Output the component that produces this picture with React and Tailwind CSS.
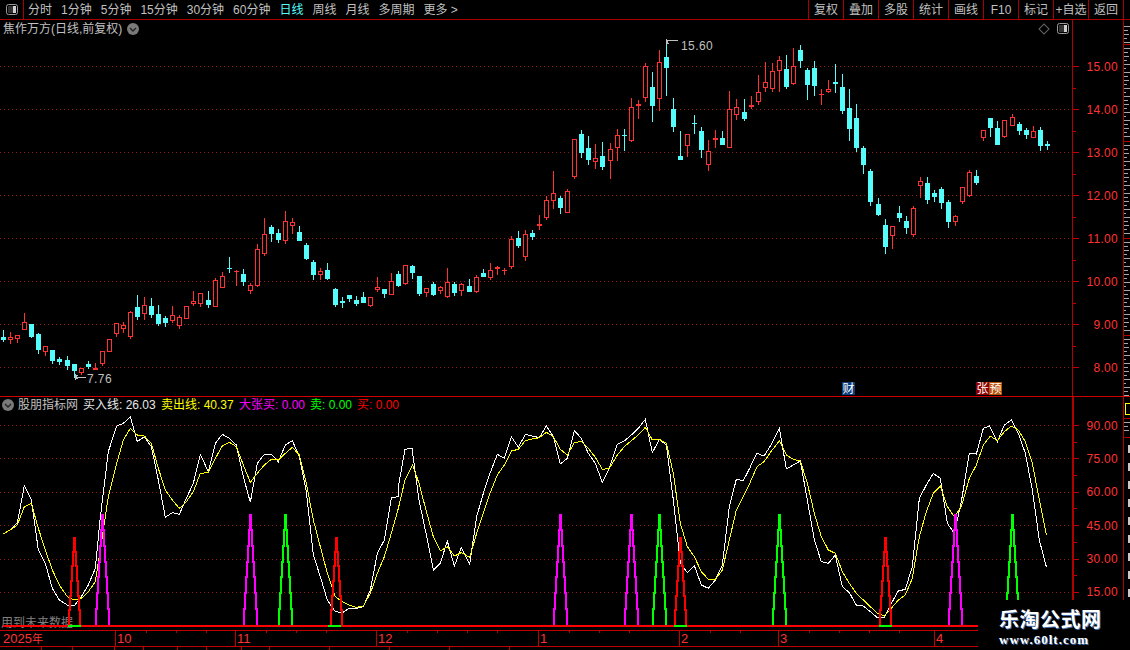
const sans = "font-['Liberation_Sans','Noto_Sans_CJK_SC',sans-serif]";

// [zoomX, red, wickTop, bodyTop, bodyBottom, wickBottom]  read at 3x from the reference
const groups = [
  { ox: 0, oy: 200, rows: [
    [10,0,390,411,420,425],[31,1,396,412,419,431],[52,1,405,406,416,429],[73,1,339,367,389,390],[94,0,372,372,411,414],
    [115,0,400,403,450,462],[136,1,438,439,456,468],[157,0,450,450,483,492],[178,0,471,477,486,495],[202,0,468,480,498,510],
    [223,0,492,492,513,535],[244,1,504,505,520,525],[265,0,483,492,501,507],[286,1,489,503,509,510],[307,1,453,454,491,498],
    [328,1,418,418,456,456],[349,1,369,370,402,411],[370,1,366,375,386,399],[391,1,333,336,411,417],[412,0,285,321,351,360],
    [433,1,291,316,342,360],[454,0,294,318,345,354],[475,0,315,342,372,378],[496,0,348,354,369,381],[517,1,318,346,362,369],
    [538,1,345,351,378,387],[559,1,319,319,356,356],[580,1,273,304,312,318],[601,1,279,280,312,321],[625,0,273,300,315,324],
    [646,1,234,240,320,321],[667,1,216,229,263,264],[688,0,171,204,207,219],[709,1,210,214,217,258],[730,0,207,222,246,258],
    [751,1,249,255,273,282],[772,1,132,148,258,261],[793,1,54,103,162,168],[814,0,75,81,102,126],[835,0,87,99,120,129],
    [856,1,33,64,122,132],[877,1,54,67,77,102],[898,0,78,96,123,123],[919,0,129,135,177,180],[940,0,180,186,225,240],
    [961,1,204,213,224,240],[982,0,189,210,237,240],[1006,0,264,267,315,321],[1027,0,291,303,309,324],[1048,0,285,285,297,306],
    [1069,0,288,300,312,318],[1090,0,276,291,309,309],[1111,1,291,292,318,321],[1132,1,231,262,270,276],
  ]},
  { ox: 380, oy: 30, rows: [
    [13,0,777,777,792,804],[34,1,729,754,794,795],[55,0,723,732,768,771],[76,1,705,706,761,765],[97,0,705,708,729,747],
    [118,0,738,738,792,798],[139,1,775,775,788,801],[160,0,756,762,795,798],[181,1,768,772,782,792],[202,1,714,757,800,804],
    [223,0,756,762,789,798],[244,1,759,763,784,798],[268,0,747,768,786,786],[289,1,735,742,785,789],[310,0,717,729,741,741],
    [331,1,699,721,743,750],[352,1,708,712,716,735],[373,1,714,721,723,735],[394,1,618,628,710,717],[415,0,603,624,648,654],
    [436,1,600,613,680,693],[457,0,600,609,621,630],[478,1,555,583,587,600],[499,1,498,511,563,570],[520,1,423,490,512,537],
    [541,0,498,504,534,552],[562,1,477,484,548,549],[583,1,327,328,440,447],[604,0,300,312,369,384],[625,0,318,354,390,405],
    [646,1,342,385,395,417],[667,0,336,378,411,420],[691,1,339,358,392,447],[712,1,297,316,353,393],[733,0,297,315,318,363],
    [754,1,204,232,332,336],[775,1,210,223,227,267],[796,1,99,109,203,216],[817,0,126,171,228,276],[838,1,60,97,206,243],
    [859,0,38,81,114,198],[880,0,204,237,291,306],[901,0,303,378,390,390],[922,1,312,313,347,381],[943,0,255,279,282,312],
    [964,0,291,303,360,384],[985,1,330,364,404,423],[1006,1,300,325,329,354],[1027,0,303,324,345,345],[1048,1,183,238,353,354],
    [1069,1,207,232,254,270],[1093,0,207,246,267,273],[1114,1,198,226,230,237],[1135,1,135,187,215,225],
  ]},
  { ox: 760, oy: 30, rows: [
    [16,1,96,157,173,186],[37,1,99,124,176,186],[58,1,78,91,124,186],[79,0,75,117,171,177],[100,1,54,109,163,165],
    [121,0,45,60,93,114],[142,0,114,120,165,210],[163,0,93,114,168,198],[184,1,177,192,196,225],[205,1,150,178,186,189],
    [226,0,102,156,162,189],[247,0,132,171,243,252],[268,0,177,234,297,333],[289,0,222,264,354,366],[310,0,348,354,405,432],
    [331,0,417,423,516,528],[355,0,504,522,555,558],[376,0,567,585,651,672],[397,1,588,589,617,657],[418,0,528,549,564,576],
    [439,0,558,573,594,612],[460,1,528,535,614,621],[481,1,441,454,467,504],[502,0,441,459,510,522],[523,0,480,489,501,516],
    [544,0,471,477,519,537],[565,0,510,516,576,594],[586,1,556,557,576,588],[607,1,471,472,516,522],[628,1,420,427,498,501],
    [649,0,420,438,459,465],[670,1,300,301,324,333],[691,0,264,264,294,321],[712,0,273,294,345,345],[733,1,270,271,320,324],
    [757,1,252,262,287,288],[778,0,276,282,303,315],[799,0,294,300,315,327],[820,1,288,304,323,324],[841,0,291,300,348,363],
    [862,0,333,342,348,360],
  ]},
];

const candles = groups.flatMap((g) =>
  g.rows.map(([zx, red, wt, bt, bb, wb]) => ({
    x: Math.floor(g.ox + zx / 3),
    red,
    wt: Math.round(g.oy + wt / 3),
    bt: Math.round(g.oy + bt / 3),
    bb: Math.round(g.oy + bb / 3),
    wb: Math.round(g.oy + wb / 3),
  }))
);

// white and yellow lines, again in zoom coordinates per crop
const toPts = (rows, ox) => rows.map(([x, y]) => `${ox + x / 3},${400 + y / 3}`).join(" ");

const white = [
  toPts([[10,402],[30,390],[52,368],[73,257],[94,300],[115,450],[136,490],[157,565],[178,600],[202,615],[223,617],[244,590],[265,555],[286,505],[300,360],[325,155],[350,78],[370,70],[391,50],[412,125],[433,110],[454,140],[475,240],[496,352],[517,338],[538,343],[559,295],[580,250],[601,163],[625,215],[646,130],[667,103],[688,115],[709,135],[730,230],[751,307],[772,190],[793,163],[814,163],[835,185],[856,135],[877,122],[898,170],[919,275],[940,465],[961,530],[982,600],[1006,635],[1027,638],[1048,625],[1069,625],[1090,620],[1111,570],[1132,460],[1153,420],[1174,293],[1195,290]], 0),
  toPts([[-5,260],[15,148],[36,145],[57,300],[78,400],[100,510],[121,490],[142,423],[163,498],[184,443],[209,492],[230,350],[250,280],[270,220],[292,163],[313,175],[334,110],[355,142],[376,103],[397,108],[418,113],[439,78],[460,110],[481,192],[502,175],[523,92],[544,115],[565,160],[586,190],[607,247],[628,205],[652,133],[673,123],[694,105],[715,85],[736,58],[757,158],[778,118],[799,135],[820,300],[841,490],[862,518],[883,497],[904,555],[925,565],[946,540],[967,495],[988,320],[1009,238],[1030,242],[1050,203]], 400),
  toPts([[0,200],[21,160],[42,168],[63,135],[88,85],[109,207],[130,195],[151,183],[172,300],[193,420],[214,485],[235,490],[256,465],[277,560],[298,578],[319,615],[340,618],[361,635],[382,653],[403,653],[424,610],[445,573],[466,568],[487,500],[508,295],[529,255],[550,220],[571,235],[592,370],[613,400],[634,305],[658,160],[679,162],[700,85],[718,78],[742,125],[763,75],[784,60],[805,100],[826,160],[847,270],[868,420],[889,500]], 750),
].join(" ");

const yellow = [
  toPts([[10,402],[30,390],[52,375],[73,320],[94,310],[115,385],[136,450],[157,510],[178,555],[202,590],[223,600],[244,595],[265,575],[286,545],[307,410],[325,290],[350,190],[370,120],[391,85],[412,105],[433,108],[454,130],[475,205],[496,270],[517,300],[538,325],[559,305],[580,275],[601,220],[625,218],[646,175],[667,138],[688,127],[709,140],[730,195],[751,247],[772,220],[793,195],[814,178],[835,180],[856,160],[877,142],[898,165],[919,250],[940,360],[961,440],[982,520],[1006,590],[1027,605],[1048,615],[1069,622],[1090,618],[1111,580],[1132,520],[1153,470],[1174,400],[1195,325]], 0),
  toPts([[15,240],[38,195],[57,250],[78,330],[100,410],[121,453],[142,440],[163,468],[184,458],[209,472],[230,400],[250,340],[270,280],[292,225],[313,195],[334,153],[355,148],[376,122],[397,117],[418,113],[439,97],[460,110],[481,148],[502,165],[523,128],[544,124],[565,145],[586,172],[607,208],[628,205],[652,165],[673,140],[694,122],[715,105],[736,82],[757,120],[778,118],[799,130],[820,220],[841,370],[862,440],[883,470],[904,515],[925,538],[946,538],[967,510],[988,420],[1009,330],[1030,290],[1050,248]], 400),
  toPts([[21,200],[42,185],[63,155],[88,122],[109,165],[130,178],[151,183],[172,250],[193,340],[214,410],[235,450],[256,460],[277,515],[298,550],[319,580],[340,600],[361,620],[382,640],[403,648],[424,625],[445,600],[466,585],[487,535],[508,410],[529,335],[550,280],[571,258],[592,320],[613,350],[634,320],[658,235],[679,195],[700,135],[721,108],[742,122],[763,95],[784,78],[805,90],[826,125],[847,190],[868,300],[889,405]], 750),
].join(" ");

const peaks = [
  { cx: 75, top: 537, color: "#ff0000" }, { cx: 337, top: 537, color: "#ff0000" },
  { cx: 681, top: 537, color: "#ff0000" }, { cx: 886, top: 537, color: "#ff0000" },
  { cx: 103, top: 514, color: "#ff00ff" }, { cx: 251, top: 514, color: "#ff00ff" },
  { cx: 561, top: 514, color: "#ff00ff" }, { cx: 632, top: 514, color: "#ff00ff" },
  { cx: 956, top: 514, color: "#ff00ff" },
  { cx: 286, top: 514, color: "#00ff00" }, { cx: 660, top: 514, color: "#00ff00" },
  { cx: 780, top: 514, color: "#00ff00" }, { cx: 1013, top: 514, color: "#00ff00" },
];

const BASE = 625;

function stairs(cx, top, dir) {
  const n = Math.round((BASE - top) / 16);
  const step = (BASE - top) / n;
  const start = dir < 0 ? cx - 1 : cx;
  let d = `M${start} ${top}`;
  for (let k = 0; k < n; k++) {
    d += ` V${Math.round(top + step * (k + 1))}`;
    if (k < n - 1) d += ` H${start + dir * (k + 1)}`;
  }
  return d;
}

function Candle({ c }) {
  const color = c.red ? "#ff3232" : "#54fcfc";
  const h = Math.max(c.bb - c.bt, 1);
  return (
    <g>
      <rect x={c.x} y={c.wt} width="1" height={Math.max(c.wb - c.wt, 1)} fill={color} />
      {c.red && h > 2 ? (
        <rect x={c.x - 1.5} y={c.bt + 0.5} width="4" height={h - 1} fill="#000" stroke={color} />
      ) : (
        <rect x={c.x - 2} y={c.bt} width="5" height={h} fill={color} />
      )}
    </g>
  );
}

// one lit pixel every 4, as in the reference
function Dots({ id }) {
  return (
    <defs>
      <pattern id={id} width="4" height="1" patternUnits="userSpaceOnUse">
        <rect width="1" height="1" fill="#901818" />
      </pattern>
    </defs>
  );
}

function PriceChart() {
  return (
    <svg viewBox="0 37 1072 359" className="w-[1072px] h-[359px] block" shapeRendering="crispEdges">
      <Dots id="priceDots" />
      {[66, 109, 152, 195, 238, 281, 324, 367].map((y) => (
        <rect key={y} x="0" y={y} width="1072" height="1" fill="url(#priceDots)" />
      ))}
      {candles.map((c, i) => <Candle key={i} c={c} />)}
      <path d="M75 377 H86 M75 377 L78 375 M75 377 L78 379 M75 374 V380" stroke="#c0c0c0" fill="none" />
      <text x="87" y="383" fill="#c0c0c0" fontSize="12" letterSpacing="0.4" className={sans}>7.76</text>
      <path d="M666 40 H678 M666 42 L669 40 M666 45 V39 M666 42 L669 44" stroke="#c0c0c0" fill="none" />
      <text x="681" y="50" fill="#c0c0c0" fontSize="12" letterSpacing="0.4" className={sans}>15.60</text>
      <rect x="842" y="382" width="13" height="13" fill="#0a3d7c" />
      <text x="842.5" y="393" fill="#fff" fontSize="12" className={sans}>财</text>
      <rect x="976" y="382" width="13" height="13" fill="#8a0000" />
      <text x="976.5" y="393" fill="#fff" fontSize="12" className={sans}>张</text>
      <rect x="989" y="382" width="13" height="13" fill="#b8500a" />
      <text x="989.5" y="393" fill="#fff" fontSize="12" className={sans}>预</text>
    </svg>
  );
}

function IndicatorChart() {
  return (
    <svg viewBox="0 412 1072 218" className="w-[1072px] h-[218px] block" shapeRendering="crispEdges">
      <Dots id="indicatorDots" />
      {[425, 458, 492, 525, 559, 592].map((y) => (
        <rect key={y} x="0" y={y} width="1072" height="1" fill="url(#indicatorDots)" />
      ))}
      <text x="1" y="627" fill="#808080" fontSize="12" className={sans}>用到未来数据</text>
      <polyline points={white} fill="none" stroke="#fff" />
      <polyline points={yellow} fill="none" stroke="#ffff00" />
      {peaks.map((p) => (
        <g key={p.cx} stroke={p.color} strokeWidth="2" fill="none">
          <path d={stairs(p.cx, p.top, -1)} />
          <path d={stairs(p.cx, p.top, 1)} />
        </g>
      ))}
      <rect x="3" y="625" width="1069" height="2" fill="#ff0000" />
      {[68, 328, 674, 879].map((x) => <rect key={x} x={x} y="625" width="13" height="2" fill="#00ff00" />)}
    </svg>
  );
}

function PanelIcon() {
  return (
    <svg width="12" height="11" viewBox="0 0 12 11" className="block">
      <rect x="0.5" y="0.5" width="11" height="10" rx="2" fill="none" stroke="#9a9a9a" />
      <rect x="7" y="2" width="3" height="7" fill="#d0d0d0" />
      <rect x="2" y="2" width="5" height="7" fill="#333" />
    </svg>
  );
}

function RoundChevron() {
  return (
    <svg width="12" height="12" viewBox="0 0 12 12" className="block shrink-0">
      <circle cx="6" cy="6" r="6" fill="#7a7a7a" />
      <path d="M3 5 L6 8 L9 5" stroke="#222" strokeWidth="1.4" fill="none" />
    </svg>
  );
}

function Axis({ labels, major, minor, tick }) {
  return labels.map((label, i) => (
    <div key={label}>
      <div className={`flex items-center ${major}`}>
        <div className={`${tick} h-px bg-[#c00000]`} />
        <span className="ml-auto mr-[5px] text-[12px] tracking-[0.3px] text-[#ff3232]">{label}</span>
      </div>
      {i < labels.length - 1 && (
        <div className={`flex items-center ${minor}`}>
          <div className="w-[3px] h-px bg-[#c00000]" />
        </div>
      )}
    </div>
  ));
}

// the side list is cut off by the window: only glyph stubs show in its 6px
function Stubs({ count }) {
  const widths = ["w-[6px]", "w-[4px]", "w-[5px]", "w-[3px]", "w-[6px]", "w-[2px]"];
  return Array.from({ length: count }, (_, i) => (
    <div key={i} className={`h-px mb-[3px] bg-[#a8a8a8] ${widths[i % 6]}`} />
  ));
}

function TimeCell({ label, width, ticks = 0 }) {
  return (
    <div className={`flex shrink-0 border-l border-[#c00000] pl-[1px] ${width}`}>
      <span className="w-[29px] shrink-0">{label}</span>
      {Array.from({ length: ticks }, (_, i) => (
        <div key={i} className="w-[30px] h-[2px] shrink-0 border-l border-[#c00000]" />
      ))}
    </div>
  );
}

const leftTabs = ["分时", "1分钟", "5分钟", "15分钟", "30分钟", "60分钟", "日线", "周线", "月线", "多周期", "更多 >"];
const rightTabs = ["复权", "叠加", "多股", "统计", "画线", "F10", "标记", "+自选", "返回"];

export default function App() {
  return (
    <div className={`relative w-[1130px] h-[650px] bg-black overflow-hidden text-[12px] text-[#c0c0c0] ${sans}`}>
      {/* top toolbar */}
      <div className="flex h-5 items-stretch border-b border-[#a80000]">
        <div className="w-6 flex items-center justify-center border-r border-[#a80000]">
          <PanelIcon />
        </div>
        <div className="flex items-center gap-[9px] pl-1">
          {leftTabs.map((t) => (
            <span key={t} className={t === "日线" ? "text-[#54fcfc]" : ""}>{t}</span>
          ))}
        </div>
        <div className="ml-auto flex mr-[6px] border-r border-[#a80000]">
          {rightTabs.map((t) => (
            <div key={t} className="w-[35px] flex items-center justify-center border-l border-[#a80000] whitespace-nowrap">{t}</div>
          ))}
        </div>
      </div>

      {/* price panel */}
      <div className="flex h-[377px] border-b border-[#d00000]">
        <div className="w-[1072px] flex flex-col">
          <div className="h-[17px] flex items-center gap-[5px] pl-[3px]">
            <span>焦作万方(日线,前复权)</span>
            <RoundChevron />
            <div className="ml-auto mr-[3px] flex items-center gap-[9px]">
              <div className="w-[8px] h-[8px] rotate-45 border border-[#666]" />
              <PanelIcon />
            </div>
          </div>
          <PriceChart />
        </div>
        <div className="w-[52px] border-l border-r border-[#b00000] pt-[36px]">
          <Axis
            labels={["15.00", "14.00", "13.00", "12.00", "11.00", "10.00", "9.00", "8.00"]}
            major="h-[21px]"
            minor="h-[22px]"
            tick="w-[6px]"
          />
        </div>
        <div className="flex-1 overflow-hidden">
          <div className="h-[25px] pt-[6px] border-b border-[#b00000]"><Stubs count={5} /></div>
          <div className="h-[97px] pt-[3px] border-b border-[#b00000]"><Stubs count={23} /></div>
          <div className="h-[97px] pt-[3px] border-b border-[#b00000]"><Stubs count={23} /></div>
          <div className="h-[97px] pt-[3px] border-b border-[#b00000]"><Stubs count={23} /></div>
          <div className="pt-[3px]"><Stubs count={15} /></div>
        </div>
      </div>

      {/* indicator panel */}
      <div className="flex h-[233px]">
        <div className="w-[1072px] flex flex-col">
          <div className="h-[15px] flex items-center pl-[2px] text-[12px] whitespace-nowrap">
            <RoundChevron />
            <span className="ml-[4px] w-[65px]">股朋指标网</span>
            <span className="w-[78px] text-[#e8e8e8]">买入线: 26.03</span>
            <span className="w-[78px] text-[#ffff00]">卖出线: 40.37</span>
            <span className="w-[71px] text-[#ff00ff]">大张买: 0.00</span>
            <span className="w-[47px] text-[#00ff00]">卖: 0.00</span>
            <span className="text-[#ff0000]">买: 0.00</span>
          </div>
          <IndicatorChart />
        </div>
        <div className="w-[52px] border-l-2 border-r border-[#b00000] pt-[20px]">
          <Axis
            labels={["90.00", "75.00", "60.00", "45.00", "30.00", "15.00"]}
            major="h-[17px]"
            minor="h-[16.4px]"
            tick="w-[5px]"
          />
        </div>
        <div className="flex-1 overflow-hidden pt-[6px]">
          <div className="h-[12px] border-y border-l border-[#ffff00] ml-[1px]" />
          <div className="mt-[3px] h-[20px] pt-[3px] border-y border-[#b00000]"><Stubs count={3} /></div>
          <div className="mt-[7px] flex flex-col gap-[10px] pl-[4px]">
            {[0, 1, 2, 3, 4, 5, 6, 7, 8].map((i) => <div key={i} className="h-2 bg-[#c8c8c8]" />)}
          </div>
        </div>
      </div>

      {/* time axis */}
      <div className="flex h-[17px] border-t border-b border-[#c00000] text-[#ff3232] text-[13px] leading-[15px]">
        <div className="w-[115px] shrink-0 pl-[3px]">2025<span className="text-[11px]">年</span></div>
        <TimeCell label="10" width="w-[120px]" ticks={3} />
        <TimeCell label="11" width="w-[141px]" ticks={3} />
        <TimeCell label="12" width="w-[162px]" ticks={4} />
        <TimeCell label="1" width="w-[141px]" ticks={3} />
        <TimeCell label="2" width="w-[99px]" ticks={2} />
        <TimeCell label="3" width="w-[156px]" ticks={4} />
        <TimeCell label="4" width="w-[196px]" />
      </div>

      {/* bottom tab row, almost entirely cut off */}
      <div className="flex h-[4px]">
        {[42, 31, 42, 29, 34, 29, 35, 28, 60, 60, 60, 60].map((w, i) => (
          <div key={i} className="border-r border-[#c00000]" style={{ width: w }} />
        ))}
      </div>

      {/* site watermark over the corner */}
      <div className="absolute left-[978px] top-[600px] w-[152px] h-[50px] bg-black pl-[21px] pt-[7px] whitespace-nowrap">
        <div className="text-[20px] leading-[26px] font-bold text-white tracking-[0.5px] [text-shadow:1px_1px_0_#3f6aa8]">乐淘公式网</div>
        <div className="font-['Liberation_Serif',serif] text-[13px] leading-[14px] font-bold tracking-[1px] text-white [text-shadow:1px_1px_0_#3f6aa8]">www.60lt.com</div>
      </div>
    </div>
  );
}
